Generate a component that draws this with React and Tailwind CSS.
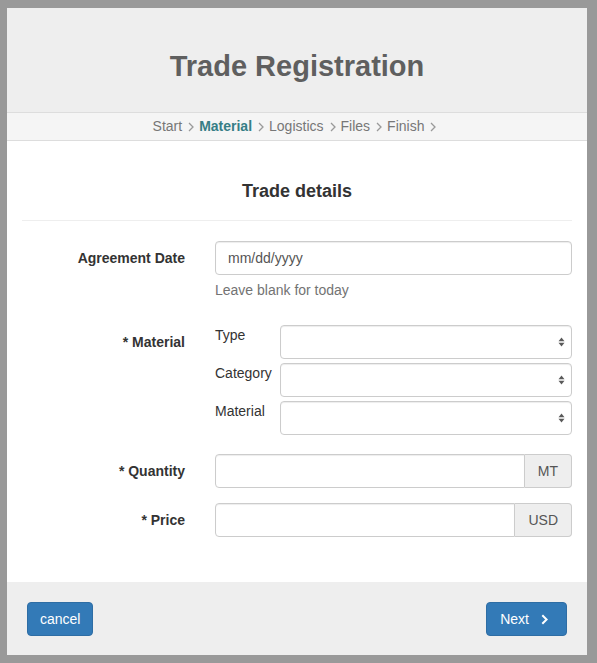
import React from "react";

const font = { fontFamily: '"Liberation Sans", Arial, Helvetica, sans-serif' };

function Chevron({ className = "" }) {
  return (
    <svg width="6" height="10" viewBox="0 0 6 10" className={className}>
      <path d="M1 1 L5 5 L1 9" fill="none" stroke="#9a9a9a" strokeWidth="1.3" />
    </svg>
  );
}

function SelectArrows() {
  return (
    <svg width="7" height="10" viewBox="0 0 7 10" className="absolute right-[6px] top-1/2 -translate-y-1/2">
      <path d="M0.5 4.2 L3.5 0.5 L6.5 4.2 Z" fill="#5a5a5a" />
      <path d="M0.5 5.8 L3.5 9.5 L6.5 5.8 Z" fill="#5a5a5a" />
    </svg>
  );
}

function Select() {
  return (
    <div className="relative flex-1 h-[34px] border border-[#ccc] rounded-[4px] bg-white shadow-[inset_0_1px_1px_rgba(0,0,0,0.075)]">
      <SelectArrows />
    </div>
  );
}

function InputGroup({ addon }) {
  return (
    <div className="flex h-[34px]">
      <div className="flex-1 border border-[#ccc] rounded-l-[4px] bg-white shadow-[inset_0_1px_1px_rgba(0,0,0,0.075)]" />
      <div className="flex items-center px-[13px] border border-l-0 border-[#ccc] rounded-r-[4px] bg-[#eee] text-[#555] text-[14px]">
        {addon}
      </div>
    </div>
  );
}

export default function App() {
  const steps = ["Start", "Material", "Logistics", "Files", "Finish"];
  return (
    <div className="h-[663px] w-[597px] bg-[#999] pt-[8px] pl-[7px] pr-[10px] pb-[8px]" style={font}>
      <div className="h-full bg-white flex flex-col">
        {/* Header */}
        <div className="h-[104px] bg-[#eee] flex items-center justify-center pt-[12px]">
          <h1 className="text-[29px] font-bold text-[#5f5f5f] leading-none">Trade Registration</h1>
        </div>
        {/* Breadcrumb */}
        <div className="h-[29px] border-y border-[#ddd] bg-[#f5f5f5] flex items-center justify-center text-[14px] text-[#777]">
          {steps.map((s) => (
            <span key={s} className="flex items-center">
              <span className={s === "Material" ? "font-bold text-[#367e86]" : ""}>{s}</span>
              <Chevron className="ml-[6px] mr-[5px]" />
            </span>
          ))}
        </div>
        {/* Body */}
        <div className="flex-1 px-[15px]">
          <div className="pt-[40px] text-center text-[18px] leading-[20px] font-bold text-[#333]">
            Trade details
          </div>
          <div className="mt-[19px] border-t border-[#eee]" />
          <div className="mt-[20px] text-[14px] leading-[20px] text-[#333]">
            {/* Agreement date */}
            <div className="flex gap-[30px] mb-[25px]">
              <div className="w-[163px] text-right font-bold pt-[7px]">Agreement Date</div>
              <div className="flex-1">
                <div className="h-[34px] border border-[#ccc] rounded-[4px] flex items-center px-[12px] text-[#555] shadow-[inset_0_1px_1px_rgba(0,0,0,0.075)]">
                  mm/dd/yyyy
                </div>
                <div className="mt-[5px] text-[#737373]">Leave blank for today</div>
              </div>
            </div>
            {/* Material */}
            <div className="flex gap-[30px] mb-[19px]">
              <div className="w-[163px] text-right font-bold pt-[7px]">* Material</div>
              <div className="flex-1 flex flex-col gap-[4px]">
                {["Type", "Category", "Material"].map((l) => (
                  <div key={l} className="flex">
                    <div className="w-[65px]">{l}</div>
                    <Select />
                  </div>
                ))}
              </div>
            </div>
            {/* Quantity */}
            <div className="flex gap-[30px] mb-[15px]">
              <div className="w-[163px] text-right font-bold pt-[7px]">* Quantity</div>
              <div className="flex-1">
                <InputGroup addon="MT" />
              </div>
            </div>
            {/* Price */}
            <div className="flex gap-[30px]">
              <div className="w-[163px] text-right font-bold pt-[7px]">* Price</div>
              <div className="flex-1">
                <InputGroup addon="USD" />
              </div>
            </div>
          </div>
        </div>
        {/* Footer */}
        <div className="h-[73px] bg-[#eee] px-[20px] pt-[20px] flex justify-between items-start">
          <button className="h-[34px] px-[12px] rounded-[4px] bg-[#337ab7] border border-[#2e6da4] text-white text-[14px] font-normal">
            cancel
          </button>
          <button className="h-[34px] pl-[13px] pr-[18px] rounded-[4px] bg-[#337ab7] border border-[#2e6da4] text-white text-[14px] font-normal flex items-center gap-[12px]">
            Next
            <svg width="7" height="11" viewBox="0 0 7 11">
              <path d="M1.3 1.2 L5.6 5.5 L1.3 9.8" fill="none" stroke="white" strokeWidth="2" />
            </svg>
          </button>
        </div>
      </div>
    </div>
  );
}
